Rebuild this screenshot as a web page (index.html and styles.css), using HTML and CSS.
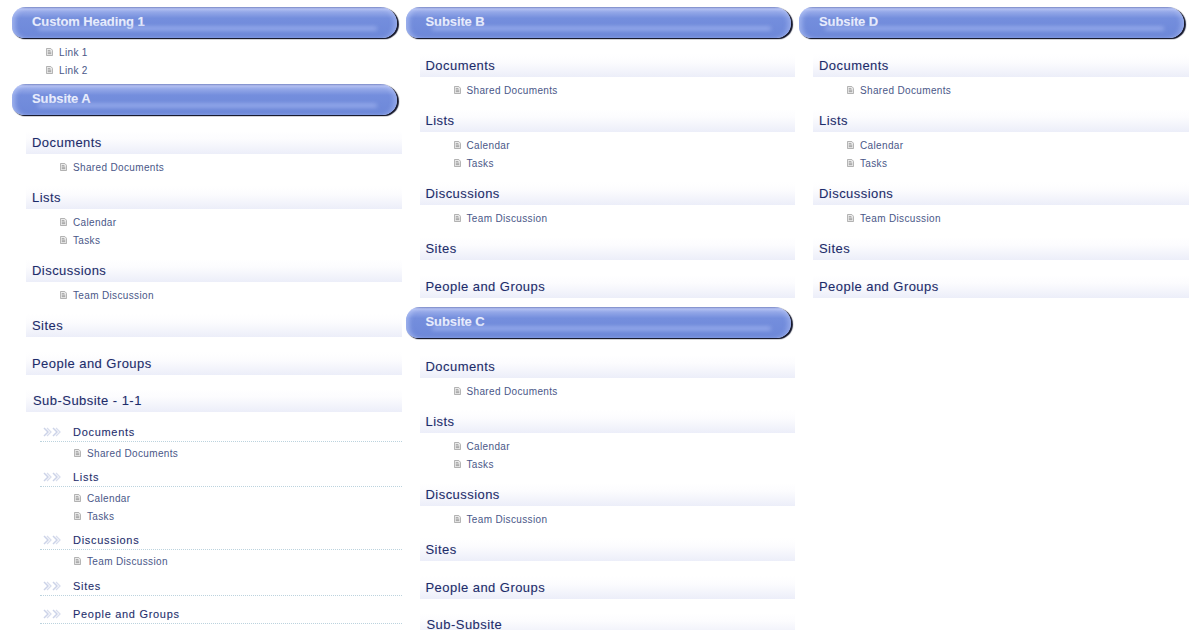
FILE: index.html
```html
<!DOCTYPE html>
<html lang="en">
<head>
<meta charset="utf-8">
<title>Quick Launch</title>
<link rel="stylesheet" href="styles.css">
</head>
<body>
<svg class="defs" width="0" height="0" aria-hidden="true">
  <symbol id="doc" viewBox="0 0 8 9">
    <path d="M.5.5h5l2 2v6h-7z" fill="#ebebeb" stroke="#a8a8a8"/>
    <path d="M2 3h3M2 4.7h4M2 6.4h4" stroke="#808080" stroke-width=".8" fill="none"/>
  </symbol>
  <symbol id="arrows" viewBox="0 0 18 10">
    <path d="M1 1l4 4-4 4M10 1l4 4-4 4" fill="none" stroke="#ccd3e8" stroke-width="1.5"/>
    <path d="M4 1l4 4-4 4M13 1l4 4-4 4" fill="none" stroke="#d8dded" stroke-width="1.3"/>
  </symbol>
</svg>
<main class="page">
  <section class="col">
    <h2 class="head head-custom">Custom Heading 1</h2>
    <ul class="links links-top">
      <li><svg class="doc"><use href="#doc"/></svg>Link 1</li>
      <li><svg class="doc"><use href="#doc"/></svg>Link 2</li>
    </ul>
    <h2 class="head head-a">Subsite A</h2>
    <h3 class="band">Documents</h3>
    <ul class="links"><li><svg class="doc"><use href="#doc"/></svg>Shared Documents</li></ul>
    <h3 class="band">Lists</h3>
    <ul class="links"><li><svg class="doc"><use href="#doc"/></svg>Calendar</li><li><svg class="doc"><use href="#doc"/></svg>Tasks</li></ul>
    <h3 class="band">Discussions</h3>
    <ul class="links"><li><svg class="doc"><use href="#doc"/></svg>Team Discussion</li></ul>
    <h3 class="band band-empty">Sites</h3>
    <h3 class="band band-empty">People and Groups</h3>
    <h3 class="band band-sub">Sub-Subsite - 1-1</h3>
    <div class="nested">
      <h4 class="sub"><svg class="arrows"><use href="#arrows"/></svg>Documents</h4>
      <ul class="links links-nested"><li><svg class="doc"><use href="#doc"/></svg>Shared Documents</li></ul>
      <h4 class="sub"><svg class="arrows"><use href="#arrows"/></svg>Lists</h4>
      <ul class="links links-nested"><li><svg class="doc"><use href="#doc"/></svg>Calendar</li><li><svg class="doc"><use href="#doc"/></svg>Tasks</li></ul>
      <h4 class="sub"><svg class="arrows"><use href="#arrows"/></svg>Discussions</h4>
      <ul class="links links-nested"><li><svg class="doc"><use href="#doc"/></svg>Team Discussion</li></ul>
      <h4 class="sub sub-empty"><svg class="arrows"><use href="#arrows"/></svg>Sites</h4>
      <h4 class="sub sub-empty"><svg class="arrows"><use href="#arrows"/></svg>People and Groups</h4>
    </div>
  </section>
  <section class="col">
    <h2 class="head">Subsite B</h2>
    <h3 class="band">Documents</h3>
    <ul class="links"><li><svg class="doc"><use href="#doc"/></svg>Shared Documents</li></ul>
    <h3 class="band">Lists</h3>
    <ul class="links"><li><svg class="doc"><use href="#doc"/></svg>Calendar</li><li><svg class="doc"><use href="#doc"/></svg>Tasks</li></ul>
    <h3 class="band">Discussions</h3>
    <ul class="links"><li><svg class="doc"><use href="#doc"/></svg>Team Discussion</li></ul>
    <h3 class="band band-empty">Sites</h3>
    <h3 class="band band-last">People and Groups</h3>
    <h2 class="head head-c">Subsite C</h2>
    <h3 class="band">Documents</h3>
    <ul class="links"><li><svg class="doc"><use href="#doc"/></svg>Shared Documents</li></ul>
    <h3 class="band">Lists</h3>
    <ul class="links"><li><svg class="doc"><use href="#doc"/></svg>Calendar</li><li><svg class="doc"><use href="#doc"/></svg>Tasks</li></ul>
    <h3 class="band">Discussions</h3>
    <ul class="links"><li><svg class="doc"><use href="#doc"/></svg>Team Discussion</li></ul>
    <h3 class="band band-empty">Sites</h3>
    <h3 class="band band-empty">People and Groups</h3>
    <h3 class="band band-sub">Sub-Subsite</h3>
  </section>
  <section class="col">
    <h2 class="head">Subsite D</h2>
    <h3 class="band">Documents</h3>
    <ul class="links"><li><svg class="doc"><use href="#doc"/></svg>Shared Documents</li></ul>
    <h3 class="band">Lists</h3>
    <ul class="links"><li><svg class="doc"><use href="#doc"/></svg>Calendar</li><li><svg class="doc"><use href="#doc"/></svg>Tasks</li></ul>
    <h3 class="band">Discussions</h3>
    <ul class="links"><li><svg class="doc"><use href="#doc"/></svg>Team Discussion</li></ul>
    <h3 class="band band-empty">Sites</h3>
    <h3 class="band band-last">People and Groups</h3>
  </section>
</main>
</body>
</html>
```
FILE: styles.css
```css
* { box-sizing: border-box; }
html, body { margin: 0; padding: 0; height: 630px; overflow: hidden; background: #fff; }
body { font-family: "Liberation Sans", Arial, sans-serif; }
.defs { position: absolute; }
ul { list-style: none; margin: 0; padding: 0; }
h2, h3, h4 { margin: 0; font-weight: 400; }

.page { display: flex; gap: 4px; padding: 7px 0 0 12px; height: 630px; overflow: hidden; }
.col { width: 389.5px; flex: none; }

.head {
  position: relative;
  width: 385px; height: 31px; margin-bottom: 16px; padding: 0 0 3px 20px;
  display: flex; align-items: center;
  font-size: 13px; font-weight: 700; color: #e9edfc; letter-spacing: -.1px;
  text-shadow: 0 0 1px rgba(233, 237, 252, .3);
  border-radius: 14px 17px 15px 12px;
  background: linear-gradient(#6a79bb 0, #b3c0f2 6%, #94a8e8 16%, #748edd 36%, #6d88d9 100%);
  box-shadow: inset 5px 0 5px -2px rgba(190, 205, 250, .6), inset -5px 0 5px -2px rgba(190, 205, 250, .45), 1px 1px 1px #16182a, 2px 1px 1px #23263c;
}
.head::after {
  content: ""; position: absolute; left: 26px; right: 20px; bottom: 8px; height: 3px;
  border-radius: 2px; background: #a3b5f0; filter: blur(2px);
}
.head-custom { margin-bottom: 0; }
.head-c { margin-bottom: 17px; }

.band {
  margin-left: 14px; height: 23px; padding: 0 6px;
  display: flex; align-items: center;
  font-size: 13px; color: #1d2c6b; letter-spacing: .45px;
  text-shadow: 0 0 1px rgba(29, 44, 107, .2);
  background: linear-gradient(#fff 0, #fcfcfe 35%, #eceef9 100%);
}
.band-empty { margin-bottom: 15px; }
.band-last { margin-bottom: 9px; }
.band-sub { margin-bottom: 10px; padding-left: 7px; margin-top: -1px; }

.links { padding: 4px 0 10px 48px; }
.links li {
  height: 18px; display: flex; align-items: center; gap: 6px;
  font-size: 10px; letter-spacing: .35px; color: #4a5788;
}
.doc { width: 7px; height: 8px; flex: none; }
.links-top { padding: 5px 0 5px 34px; }
.nested .links-nested { padding: 2px 0 5px 34px; }

.nested { margin-left: 28px; }
.sub {
  height: 20px; padding-top: 1px; display: flex; align-items: center; gap: 12px;
  font-size: 11px; letter-spacing: .7px; color: #1d2c6b;
  text-shadow: 0 0 1px rgba(29, 44, 107, .15);
  border-bottom: 1px dotted #bcd3de;
}
.arrows { width: 18px; height: 10px; margin-left: 3px; flex: none; }
.sub-empty { height: 21px; padding-top: 2px; margin-bottom: 7px; }
```
